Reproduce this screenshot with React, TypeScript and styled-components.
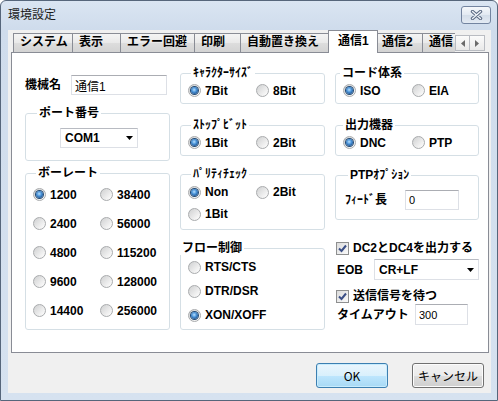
import styled, { createGlobalStyle, css } from "styled-components";

const GlobalStyle = createGlobalStyle`
  html, body { margin: 0; padding: 0; background: #fff; }
  body {
    font-family: "Liberation Sans", "Noto Sans CJK JP", sans-serif;
    font-size: 12px;
    color: #000;
  }
  * { box-sizing: border-box; }
`;

// last tab is cut off by the scroll arrows, only "通信" shows
const tabs = [
  { label: "システム", w: 60 },
  { label: "表示", w: 48 },
  { label: "エラー回避", w: 74 },
  { label: "印刷", w: 46 },
  { label: "自動置き換え", w: 90 },
  { label: "通信1", w: 46, active: true },
  { label: "通信2", w: 47 },
  { label: "通信", w: 32, clipped: true },
];

const bauds = ["1200", "38400", "2400", "56000", "4800", "115200", "9600", "128000", "14400", "256000"];

const Window = styled.div`
  width: 498px;
  height: 401px;
  display: flex;
  flex-direction: column;
  border: 1px solid #56667b;
  border-radius: 6px 6px 0 0;
  background: linear-gradient(#dae5f2, #cfdcec 28px, #d6e2f0);
  overflow: hidden;
`;

const TitleBar = styled.div`
  height: 29px;
  flex: none;
  display: flex;
  align-items: flex-start;
  padding-left: 7px;
`;

const Title = styled.span`
  margin-top: 6px;
  font: 12px/14px "Noto Sans CJK JP", sans-serif;
  color: #1c1c1c;
`;

const CloseButton = styled.div`
  margin: 5px 6px 0 auto;
  width: 30px;
  height: 18px;
  border: 1px solid #7384a0;
  border-radius: 3px;
  background: linear-gradient(#f5f8fb, #e2e9f2 50%, #d3dde9 50%, #e3eaf3);
  display: flex;
  align-items: center;
  justify-content: center;
`;

const Client = styled.div`
  flex: 1;
  margin: 0 6px 7px 7px;
  padding: 0 2px 0 3px;
  background: #f0f0f0;
  display: flex;
  flex-direction: column;
`;

const TabStrip = styled.div`
  height: 22px;
  flex: none;
  display: flex;
  align-items: flex-end;
  padding-left: 2px;
`;

const Tab = styled.div<{ $w: number; $active?: boolean; $clipped?: boolean; $first?: boolean }>`
  width: ${(p) => p.$w}px;
  height: 19px;
  flex: none;
  padding-left: 6px;
  font: bold 12px/17px "Liberation Sans", "Noto Sans CJK JP", sans-serif;
  white-space: nowrap;
  overflow: hidden;
  border-top: 1px solid #898c95;
  border-right: ${(p) => (p.$clipped ? "none" : "1px solid #898c95")};
  border-left: ${(p) => (p.$first ? "1px solid #898c95" : "none")};
  background: linear-gradient(#f4f4f4, #e9e9e9 50%, #dddddd 51%, #d3d3d3);
  ${(p) =>
    p.$active &&
    css`
      position: relative;
      z-index: 2;
      width: ${p.$w + 4}px;
      height: 23px;
      margin: 0 -2px -1px -3px;
      padding-left: 9px;
      line-height: 20px;
      border-left: 1px solid #898c95;
      border-right: 1px solid #898c95;
      background: #fff;
    `}
`;

const ScrollArrows = styled.div`
  align-self: flex-start;
  margin-top: 5px;
  display: flex;
`;

const ArrowButton = styled.div`
  width: 15px;
  height: 16px;
  border: 1px solid #b9bcc2;
  background: linear-gradient(#fbfbfb, #e9e9e9);
  display: flex;
  align-items: center;
  justify-content: center;
  & + & { border-left: none; }
`;

const Panel = styled.div`
  height: 301px;
  flex: none;
  border: 1px solid #898c95;
  background: #fff;
  padding: 13px 0 0 13px;
`;

const Columns = styled.div`
  display: grid;
  grid-template-columns: 145px 145px 144px;
  column-gap: 10px;
  align-items: start;
`;

const Column = styled.div`
  display: flex;
  flex-direction: column;
`;

const Row = styled.div<{ $h: number; $mt?: number; $ml?: number }>`
  height: ${(p) => p.$h}px;
  margin-top: ${(p) => p.$mt ?? 0}px;
  margin-left: ${(p) => p.$ml ?? 0}px;
  display: flex;
  align-items: center;
  flex: none;
`;

const Label = styled.span<{ $w?: number }>`
  width: ${(p) => (p.$w ? `${p.$w}px` : "auto")};
  flex: none;
  font-weight: bold;
  line-height: 14px;
  white-space: nowrap;
`;

const TextBox = styled.div<{ $w: number; $h: number; $small?: boolean }>`
  width: ${(p) => p.$w}px;
  height: ${(p) => p.$h}px;
  border: 1px solid #dde0e6;
  border-top-color: #abadb3;
  background: #fff;
  padding-left: 3px;
  display: flex;
  align-items: center;
  font: ${(p) => (p.$small ? "11px" : "12px")} "Liberation Sans Narrow", "Liberation Sans", "Noto Sans CJK JP", sans-serif;
`;

const Combo = styled.div<{ $w?: number; $h: number }>`
  width: ${(p) => (p.$w ? `${p.$w}px` : "auto")};
  flex: ${(p) => (p.$w ? "none" : "1")};
  height: ${(p) => p.$h}px;
  border: 1px solid #dde0e6;
  border-top-color: #b8bbc2;
  background: #fff;
  display: flex;
  align-items: center;
  padding: 0 4px 0 4px;
  font-weight: bold;
  justify-content: space-between;
`;

const Group = styled.fieldset<{ $mt?: number }>`
  margin: ${(p) => p.$mt ?? 0}px 0 0 0;
  padding: 0;
  min-width: 0;
  border: 1px solid #d5dfe5;
  border-radius: 3px;
`;

const Legend = styled.legend<{ $offset: number }>`
  margin-left: ${(p) => p.$offset - 3}px;
  padding: 0 2px;
  font: bold 12px/14px "Liberation Sans", "Noto Sans CJK JP", sans-serif;
`;

const GroupBody = styled.div<{ $pt?: number; $pb: number; $pl?: number }>`
  padding: ${(p) => p.$pt ?? 0}px 0 ${(p) => p.$pb}px ${(p) => p.$pl ?? 7}px;
`;

const RadioGrid = styled.div<{ $col?: number; $row: number }>`
  display: grid;
  grid-template-columns: ${(p) => (p.$col ? `${p.$col}px auto` : "auto")};
  grid-auto-rows: ${(p) => p.$row}px;
  align-items: center;
`;

const Option = styled.div`
  display: flex;
  align-items: center;
  gap: 4px;
  font-weight: bold;
  line-height: 14px;
  white-space: nowrap;
`;

const RadioDot = styled.span<{ $on?: boolean }>`
  width: 13px;
  height: 13px;
  flex: none;
  border-radius: 50%;
  border: 1px solid #a9abad;
  background: linear-gradient(135deg, #cfd0d1, #f4f4f4 75%, #fff);
  display: flex;
  align-items: center;
  justify-content: center;
  &::after {
    content: "";
    width: 7px;
    height: 7px;
    border-radius: 50%;
    ${(p) =>
      p.$on
        ? css`
            background: radial-gradient(circle at 45% 40%, #b9e1ff 0, #4a93d8 40%, #1a4f8c 80%, #0d3361 100%);
            box-shadow: 0 0 0 1px #234a73;
          `
        : css`
            background: transparent;
          `}
  }
`;

const CheckBoxBox = styled.span`
  width: 13px;
  height: 13px;
  flex: none;
  border: 1px solid #8e8f8f;
  background: linear-gradient(135deg, #dcdcdc, #fafafa);
  display: flex;
  align-items: center;
  justify-content: center;
`;

const ButtonRow = styled.div`
  margin-top: 10px;
  padding-right: 5px;
  display: flex;
  justify-content: flex-end;
  gap: 24px;
`;

const DialogButton = styled.div<{ $default?: boolean }>`
  width: 72px;
  height: 25px;
  border-radius: 3px;
  display: flex;
  align-items: center;
  justify-content: center;
  font: 12px "Noto Sans CJK JP", "Liberation Sans", sans-serif;
  ${(p) =>
    p.$default
      ? css`
          border: 1px solid #3c7fb1;
          background: linear-gradient(#eaf6fd, #d9f0fc 50%, #bee6fd 51%, #a7d9f5);
          box-shadow: inset 0 0 0 1px #c8ecfd;
        `
      : css`
          border: 1px solid #707070;
          background: linear-gradient(#f2f2f2, #ebebeb 50%, #dddddd 51%, #cfcfcf);
          box-shadow: inset 0 0 0 1px #fcfcfc;
        `}
`;

const Radio = ({ label, on }: { label: string; on?: boolean }) => (
  <Option>
    <RadioDot $on={on} />
    <span>{label}</span>
  </Option>
);

const Check = ({ label }: { label: string }) => (
  <Option>
    <CheckBoxBox>
      <svg width="11" height="11" viewBox="0 0 11 11">
        <path d="M2 5.5 L4.5 8 L9 2.5" fill="none" stroke="#3b4f86" strokeWidth="2" />
      </svg>
    </CheckBoxBox>
    <span>{label}</span>
  </Option>
);

const DropArrow = () => (
  <svg width="7" height="4" viewBox="0 0 7 4">
    <path d="M0 0 H7 L3.5 4 Z" fill="#000" />
  </svg>
);

export default function App() {
  return (
    <>
      <GlobalStyle />
      <Window>
        <TitleBar>
          <Title>環境設定</Title>
          <CloseButton>
            <svg width="13" height="10" viewBox="0 0 13 10">
              <path d="M2.5 1.5 L10.5 8.5 M10.5 1.5 L2.5 8.5" stroke="#5a6982" strokeWidth="3.4" strokeLinecap="round" />
              <path d="M2.5 1.5 L10.5 8.5 M10.5 1.5 L2.5 8.5" stroke="#eef2f7" strokeWidth="1.4" strokeLinecap="round" />
            </svg>
          </CloseButton>
        </TitleBar>
        <Client>
          <TabStrip>
            {tabs.map((t, i) => (
              <Tab key={t.label} $w={t.w} $active={t.active} $clipped={t.clipped} $first={i === 0}>
                {t.label}
              </Tab>
            ))}
            <ScrollArrows>
              <ArrowButton>
                <svg width="4" height="7" viewBox="0 0 4 7"><path d="M4 0 V7 L0 3.5 Z" fill="#6a6a6a" /></svg>
              </ArrowButton>
              <ArrowButton>
                <svg width="4" height="7" viewBox="0 0 4 7"><path d="M0 0 V7 L4 3.5 Z" fill="#6a6a6a" /></svg>
              </ArrowButton>
            </ScrollArrows>
          </TabStrip>
          <Panel>
            <Columns>
              <Column>
                <Row $h={20} $mt={9}>
                  <Label $w={46}>機械名</Label>
                  <TextBox $w={96} $h={20}>通信1</TextBox>
                </Row>
                <Group $mt={11}>
                  <Legend $offset={14}>ポート番号</Legend>
                  <GroupBody $pt={8} $pb={12} $pl={34}>
                    <Combo $w={78} $h={20}>
                      COM1
                      <DropArrow />
                    </Combo>
                  </GroupBody>
                </Group>
                <Group $mt={5}>
                  <Legend $offset={13}>ボーレート</Legend>
                  <GroupBody $pb={4}>
                    <RadioGrid $col={67} $row={29}>
                      {bauds.map((b, i) => (
                        <Radio key={b} label={b} on={i === 0} />
                      ))}
                    </RadioGrid>
                  </GroupBody>
                </Group>
              </Column>

              <Column>
                <Group>
                  <Legend $offset={13}>ｷｬﾗｸﾀｰｻｲｽﾞ</Legend>
                  <GroupBody $pb={2}>
                    <RadioGrid $col={68} $row={21}>
                      <Radio label="7Bit" on />
                      <Radio label="8Bit" />
                    </RadioGrid>
                  </GroupBody>
                </Group>
                <Group $mt={14}>
                  <Legend $offset={13}>ｽﾄｯﾌﾟﾋﾞｯﾄ</Legend>
                  <GroupBody $pb={2}>
                    <RadioGrid $col={68} $row={21}>
                      <Radio label="1Bit" on />
                      <Radio label="2Bit" />
                    </RadioGrid>
                  </GroupBody>
                </Group>
                <Group $mt={11}>
                  <Legend $offset={13}>ﾊﾟﾘﾃｨﾁｪｯｸ</Legend>
                  <GroupBody $pb={4}>
                    <RadioGrid $col={68} $row={22}>
                      <Radio label="Non" on />
                      <Radio label="2Bit" />
                      <Radio label="1Bit" />
                    </RadioGrid>
                  </GroupBody>
                </Group>
                <Group $mt={11}>
                  <Legend $offset={2}>フロー制御</Legend>
                  <GroupBody $pb={2}>
                    <RadioGrid $row={24}>
                      <Radio label="RTS/CTS" />
                      <Radio label="DTR/DSR" />
                      <Radio label="XON/XOFF" on />
                    </RadioGrid>
                  </GroupBody>
                </Group>
              </Column>

              <Column>
                <Group>
                  <Legend $offset={7}>コード体系</Legend>
                  <GroupBody $pb={2}>
                    <RadioGrid $col={69} $row={21}>
                      <Radio label="ISO" on />
                      <Radio label="EIA" />
                    </RadioGrid>
                  </GroupBody>
                </Group>
                <Group $mt={14}>
                  <Legend $offset={10}>出力機器</Legend>
                  <GroupBody $pb={2}>
                    <RadioGrid $col={69} $row={21}>
                      <Radio label="DNC" on />
                      <Radio label="PTP" />
                    </RadioGrid>
                  </GroupBody>
                </Group>
                <Group $mt={12}>
                  <Legend $offset={15}>PTPｵﾌﾟｼｮﾝ</Legend>
                  <GroupBody $pt={8} $pb={9} $pl={9}>
                    <Row $h={20}>
                      <Label $w={60}>ﾌｨｰﾄﾞ長</Label>
                      <TextBox $w={54} $h={20} $small>0</TextBox>
                    </Row>
                  </GroupBody>
                </Group>
                <Row $h={16} $mt={20} $ml={1}>
                  <Check label="DC2とDC4を出力する" />
                </Row>
                <Row $h={21} $mt={3} $ml={2}>
                  <Label $w={37}>EOB</Label>
                  <Combo $h={21}>
                    CR+LF
                    <DropArrow />
                  </Combo>
                </Row>
                <Row $h={16} $mt={8} $ml={1}>
                  <Check label="送信信号を待つ" />
                </Row>
                <Row $h={21} $ml={2}>
                  <Label $w={78}>タイムアウト</Label>
                  <TextBox $w={53} $h={21} $small>300</TextBox>
                </Row>
              </Column>
            </Columns>
          </Panel>
          <ButtonRow>
            <DialogButton $default>OK</DialogButton>
            <DialogButton>キャンセル</DialogButton>
          </ButtonRow>
        </Client>
      </Window>
    </>
  );
}
